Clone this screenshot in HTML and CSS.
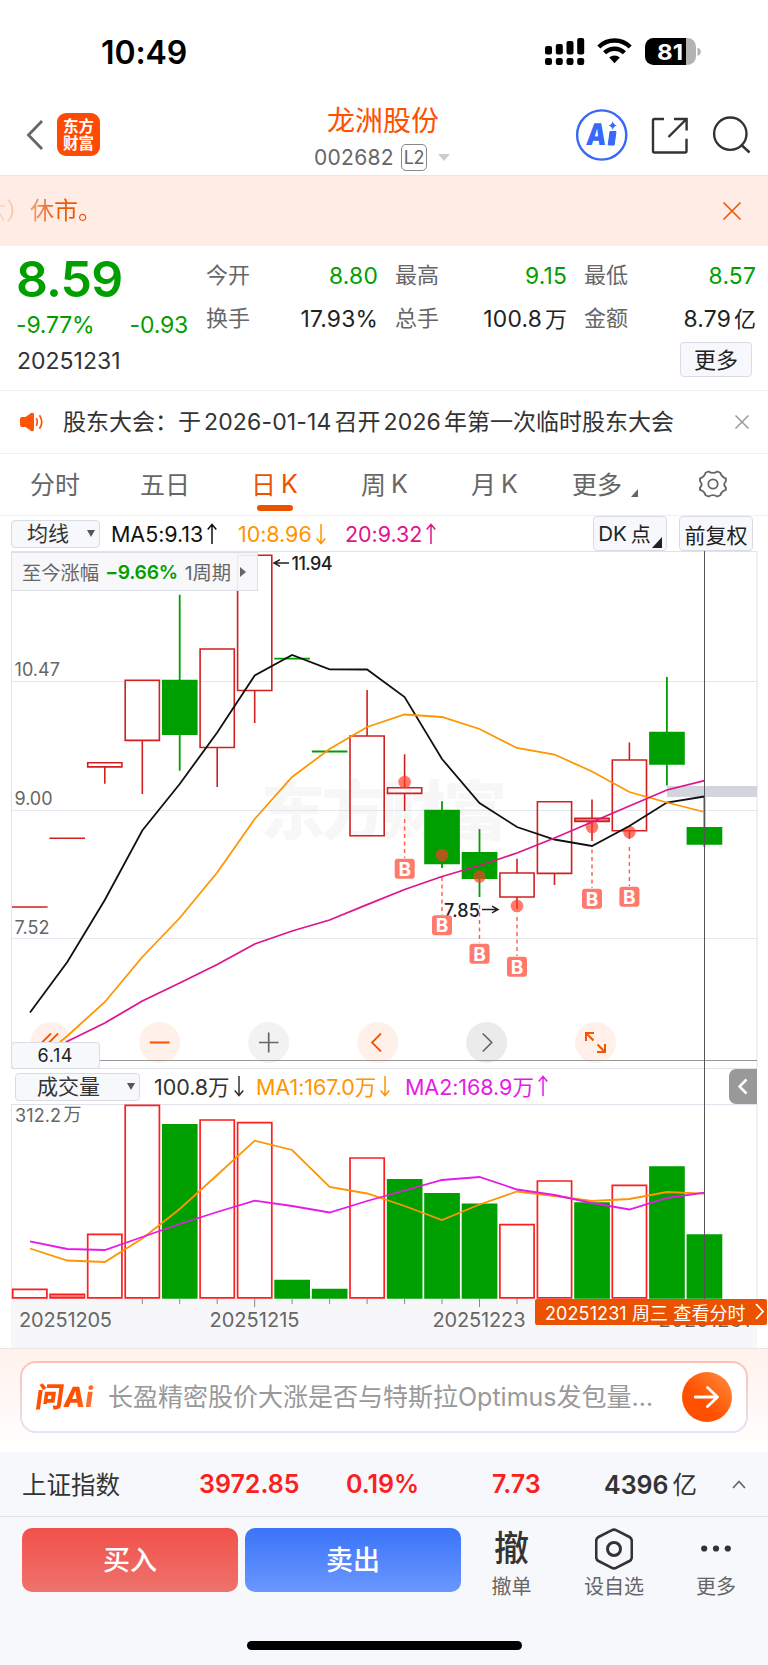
FILE: index.html
```html
<!DOCTYPE html>
<html lang="zh-CN">
<head>
<meta charset="utf-8">
<title>龙洲股份 002682</title>
<link rel="stylesheet" href="styles.css">
</head>
<body>
<div class="phone">
  <header class="status">
    <span class="clock">10:49</span>
    <svg class="status-icons" width="160" height="30" viewBox="542 36 160 30">
      <g fill="#000">
        <rect x="545" y="46" width="7" height="8.5" rx="2"/><rect x="555.8" y="44" width="7" height="10.5" rx="2"/><rect x="566.5" y="41" width="7" height="13.5" rx="2"/><rect x="577.2" y="38" width="7" height="16.5" rx="2"/>
        <rect x="545" y="58" width="7" height="7" rx="2.2"/><rect x="555.8" y="58" width="7" height="7" rx="2.2"/><rect x="566.5" y="58" width="7" height="7" rx="2.2"/><rect x="577.2" y="58" width="7" height="7" rx="2.2"/>
        <path d="M609.2 57.6a7.7 7.7 0 0 1 10.6 0L614.5 63.2z"/>
      </g>
      <path d="M604.6 52.8a14 14 0 0 1 19.8 0M598.8 47a22.3 22.3 0 0 1 31.4 0" fill="none" stroke="#000" stroke-width="4.4"/>
      <path d="M686 38h1.500a8.500 8.500 0 0 1 8.500 8.500v10a8.500 8.500 0 0 1-8.500 8.500H686z" fill="#b3b3b3"/>
      <path d="M653.500 38H686v27H653.500a8.500 8.500 0 0 1-8.500-8.500v-10a8.500 8.500 0 0 1 8.500-8.500z" fill="#000"/>
      <path d="M697.500 47.500q3.300 1.300 3.300 4.300t-3.300 4.300z" fill="#b3b3b3"/>
      <text class="battery-level" x="657" y="60" textLength="26" lengthAdjust="spacingAndGlyphs">81</text>
    </svg>
  </header>

  <nav class="nav">
    <div class="nav-left">
      <svg width="20" height="34" viewBox="0 0 20 34"><path d="M18 3 4.500 17 18 31" fill="none" stroke="#666" stroke-width="2.800"/></svg>
      <div class="app-logo"><span>东方</span><span>财富</span></div>
    </div>
    <div class="nav-title">
      <div class="stock-name">龙洲股份</div>
      <div class="stock-code"><span>002682</span><span class="l2">L2</span><i class="caret"></i></div>
    </div>
    <svg class="nav-icons" width="180" height="56" viewBox="574 107 180 56" fill="none" stroke="#333" stroke-width="2.400">
      <circle cx="601.700" cy="135" r="24.600" stroke="#3868f8"/>
      <text class="ai-text" transform="translate(585.500 145) skewX(-6)" textLength="20" lengthAdjust="spacingAndGlyphs">A</text>
      <path d="M610 131.500l6 0-1.800 13.500h-6z" fill="#3868f8" stroke="#3868f8" stroke-width="1"/>
      <path d="M612.700 121.200q.800 3.600 4.200 4.300-3.400.800-4.200 4.400-.800-3.600-4.200-4.400 3.400-.700 4.200-4.300z" fill="#3868f8" stroke="none"/>
      <path d="M664 119h-9.500a1.500 1.500 0 0 0-1.500 1.500v30.500a1.500 1.500 0 0 0 1.500 1.500h30.500a1.500 1.500 0 0 0 1.500-1.500v-12.300M674 119h12.600v11.500M686 119.500l-17.500 17.500"/>
      <circle cx="730.300" cy="133.700" r="16.200"/><path d="M741.500 145l8 7.500"/>
    </svg>
  </nav>

  <div class="banner"><span class="banner-text">六）休市。</span>
    <svg width="20" height="20" viewBox="0 0 20 20"><path d="M1.500 1.500l17 17M18.500 1.500l-17 17" stroke="#e95a0c" stroke-width="1.700"/></svg>
  </div>

  <section class="quote">
    <div class="quote-main">
      <div class="price">8.59</div>
      <div class="change"><span>-9.77%</span><span>-0.93</span></div>
      <div class="date">20251231</div>
    </div>
    <div class="quote-side">
      <div class="stats">
        <div><span>今开</span><b class="down">8.80</b></div><div><span>最高</span><b class="down">9.15</b></div><div><span>最低</span><b class="down">8.57</b></div>
        <div><span>换手</span><b>17.93%</b></div><div><span>总手</span><b>100.8<em>万</em></b></div><div><span>金额</span><b>8.79<em>亿</em></b></div>
      </div>
      <button class="more">更多</button>
    </div>
  </section>

  <section class="notice">
    <svg width="24" height="20" viewBox="0 0 24 20"><path d="M2 5h3.500L11.500.8Q14 .2 14 2.500v15q0 2.300-2.500 1.700L5.500 15H2q-2 0-2-2V7q0-2 2-2z" fill="#ff5406"/><path d="M16.300 6.200q2 3.800 0 7.600M19.500 3.300q4.500 6.700 0 13.400" fill="none" stroke="#ff5406" stroke-width="1.700"/></svg>
    <p><span>股东大会：</span><span>于</span><span class="num">2026-01-14</span><span>召开</span><span class="num">2026</span><span>年第一次临时股东大会</span></p>
    <svg class="notice-x" width="16" height="16" viewBox="0 0 16 16"><path d="M1.500 1.500l13 13M14.500 1.500l-13 13" stroke="#999" stroke-width="1.500"/></svg>
  </section>

  <nav class="tabs">
    <span>分时</span><span>五日</span><span class="on">日<i>K</i></span><span>周<i>K</i></span><span>月<i>K</i></span><span>更多<svg width="7" height="8" viewBox="0 0 7 8"><path d="M7 0v8H0z" fill="#666"/></svg></span>
    <span class="gear"><svg width="30" height="30" viewBox="0 0 30 30" fill="none" stroke="#666" stroke-width="1.800" stroke-linejoin="round"><path d="M10.800 2.200Q15 5.200 19.200 2.200L22 3.500Q23 7.500 27.300 9.300V12.200Q24.200 15.500 27.300 18.800V21Q23 22.500 22 26.500L19.200 27.800Q15 24.800 10.800 27.800L8 26.500Q7 22.500 2.700 21V18.800Q5.800 15.500 2.700 12.200V9.300Q7 7.500 8 3.500Z" transform="translate(-.8 .3) scale(1.050 .98)"/><circle cx="15" cy="15" r="4.700"/></svg></span>
  </nav>

  <div class="ma-row">
    <div class="select">均线<i></i></div>
    <span class="ma5">MA5:9.13<svg class="arr" width="10" height="22" viewBox="0 0 10 22"><path d="M5 21V2M.700 6.500 5 1.500 9.300 6.500"/></svg></span>
    <span class="ma10">10:8.96<svg class="arr" width="10" height="22" viewBox="0 0 10 22"><path d="M5 1v19M.700 15.500 5 20.500 9.300 15.500"/></svg></span>
    <span class="ma20">20:9.32<svg class="arr" width="10" height="22" viewBox="0 0 10 22"><path d="M5 21V2M.700 6.500 5 1.500 9.300 6.500"/></svg></span>
    <div class="btn dk">DK<em>点</em><svg width="10" height="11" viewBox="0 0 10 11"><path d="M10 0v11H0z" fill="#222"/></svg></div>
    <div class="btn">前复权</div>
  </div>

  <section class="charts">
    <svg class="chart" width="768" height="518" viewBox="0 551 768 518" fill="none">
      <text class="watermark" x="261" y="834" textLength="246">东方财富</text>
      <path d="M11.500 681.500H757M11.500 810.500H757M11.500 938.500H757" stroke="#e3e8f0"/>
      <path d="M11.500 1068.500V551.500H757V1068.500z" stroke="#dfe2ea"/>
      <rect x="667" y="786" width="90" height="11" fill="#d2d5db"/>
      <g class="axis">
        <text x="14.500" y="676" textLength="45.500">10.47</text><text x="14.500" y="805" textLength="38">9.00</text><text x="14.500" y="934" textLength="35">7.52</text>
      </g>
      <g stroke="#009f00" fill="#009f00" stroke-width="1.800">
        <path d="M179.700 594.700V770.700M442 801.300V868M479.500 829V897M666.900 677V785.500M704.400 797V847M274.300 658.700h35.600M311.800 751.500h35.600"/>
        <path stroke="none" d="M161.900 679.700h35.700v55.300h-35.700zM424.200 809.700h35.700v54.500h-35.700zM461.700 852h35.700v27h-35.700zM649.100 731.800h35.700v32.900h-35.700zM686.600 827h35.700v17.700h-35.700z"/>
      </g>
      <g stroke="#d22020" stroke-width="1.600">
        <path d="M12 907h35.600M49.400 838.300h35.600M104.800 767v16.700M142.300 740.500V794M217.200 747.500V787M254.700 690.500V723M367.100 736V690M404.600 787V754.300M404.600 794V811M517 873V858.700M517 897V909M554.500 873V885M592 799.500V841M629.400 760V742.500M629.400 831V839"/>
        <path d="M87.700 762.700h34.200v4.200h-34.200zM125.200 680.300h34.200v60.100h-34.200zM200.100 649h34.200v98.500h-34.200zM237.600 555.300h34.200v135.200h-34.200zM350 736h34.200v99.800H350zM387.500 787.700h34.200v5.700h-34.200zM499.900 873h34.200v24h-34.200zM537.400 801.700h34.200v71.700h-34.200zM612.300 760h34.200v70.700h-34.200z"/>
        <path fill="#e68080" d="M574.900 818.300h34.200v3.100h-34.200z"/>
      </g>
      <g class="extreme"><path d="M289 563H274.500M280 559.700l-6 3.300 6 3.300M482 909.500h15M492 906.200l6 3.300-6 3.300" stroke="#222" stroke-width="1.500"/><text x="291.500" y="569.500" textLength="41">11.94</text><text x="444" y="917" textLength="36">7.85</text></g>
      <g fill="#ff3b25" fill-opacity=".68"><circle cx="404.600" cy="782" r="6.300"/><circle cx="442" cy="855" r="6.300"/><circle cx="479.500" cy="876.500" r="6.300"/><circle cx="517" cy="906" r="6.300"/><circle cx="592" cy="827" r="6.300"/><circle cx="629.400" cy="832" r="6.300"/></g>
      <path d="M404.600 819V858M442 877V915M479.500 905V943M517 917V956M592 849.500V888M629.400 847V886" stroke="#ff5a48" stroke-width="1.400" stroke-dasharray="4 3.500"/>
      <path d="M30 1012.500 67.300 962 104.800 900 142.300 830.500 179.700 784 217.200 732.500 254.700 675.500 292.100 655 329.600 669.300 367.100 669.500 404.600 697 442 759 479.500 803 517 827 554.500 839.500 592 846 629.400 826 666.900 802.500 704.400 796.500" stroke="#111" stroke-width="1.800"/>
      <g class="tools">
        <circle cx="51" cy="1042.500" r="20.500" fill="#fff0e9"/><circle cx="159.700" cy="1042.500" r="20.500" fill="#fff0e9"/><circle cx="268.700" cy="1042.500" r="20.500" fill="#f2f2f2"/><circle cx="377.700" cy="1042.500" r="20.500" fill="#fff0e9"/><circle cx="486.700" cy="1042.500" r="20.500" fill="#ebebeb"/><circle cx="595.500" cy="1042.500" r="20.500" fill="#fff0e9"/>
        <path d="M51 1033.500l-9 9 9 9M58 1033.500l-9 9 9 9M149.800 1042.500h19.800M381 1033.500l-9 9 9 9" stroke="#f05508" stroke-width="1.800"/>
        <path d="M259 1042.500h19.500M268.700 1032.500v20M482.700 1033.500l9 9-9 9" stroke="#666" stroke-width="1.700"/>
        <path d="M586 1041v-8h8M586.500 1033.500l7 7M605 1044v8h-8M604.500 1051.500l-7-7" stroke="#f05508" stroke-width="2"/>
      </g>
      <path d="M60 1042 67.300 1036 104.800 1002 142.300 957 179.700 918 217.200 872.500 254.700 819 292.100 777 329.600 749 367.100 727 404.600 714.500 442 717 479.500 729 517 748 554.500 754.500 592 771.500 629.400 792 666.900 802.500 704.400 812" stroke="#ff9500" stroke-width="1.800"/>
      <path d="M66 1042 104.800 1023 142.300 1001 179.700 983 217.200 964.500 254.700 944 292.100 931 329.600 920 367.100 904.700 404.600 889.500 442 876.500 479.500 865.500 517 853 554.500 838 592 822 629.400 806 666.900 790 704.400 780.700" stroke="#e0148c" stroke-width="1.800"/>
      <path d="M100 1060.500H757" stroke="#999"/>
      <g fill="#ff7a6b"><rect x="394.700" y="858.700" width="20" height="20" rx="3"/><rect x="432" y="915.200" width="20" height="20" rx="3"/><rect x="469.500" y="943.700" width="20" height="20" rx="3"/><rect x="507" y="956.800" width="20" height="20" rx="3"/><rect x="582" y="888.800" width="20" height="20" rx="3"/><rect x="619.400" y="886.700" width="20" height="20" rx="3"/></g>
      <g class="buy"><text x="404.700" y="875.800">B</text><text x="442" y="932.300">B</text><text x="479.500" y="960.800">B</text><text x="517" y="973.900">B</text><text x="592" y="905.900">B</text><text x="629.400" y="903.800">B</text></g>
      <rect x="11.500" y="1042.500" width="88" height="26" rx="3" fill="#f7f8fb" stroke="#d9dce4"/>
      <text class="low" x="37.500" y="1062" textLength="35">6.14</text>
    </svg>
    <div class="gain"><span>至今涨幅</span><b>−9.66%</b><span>1周期</span><svg width="6" height="10" viewBox="0 0 6 10"><path d="M0 0l6 5-6 5z" fill="#666"/></svg></div>

    <div class="vol-row">
      <div class="select">成交量<i></i></div>
      <span class="v0">100.8万<svg class="arr" width="10" height="22" viewBox="0 0 10 22"><path d="M5 1v19M.700 15.500 5 20.500 9.300 15.500"/></svg></span>
      <span class="v1">MA1:167.0万<svg class="arr" width="10" height="22" viewBox="0 0 10 22"><path d="M5 1v19M.700 15.500 5 20.500 9.300 15.500"/></svg></span>
      <span class="v2">MA2:168.9万<svg class="arr" width="10" height="22" viewBox="0 0 10 22"><path d="M5 21V2M.700 6.500 5 1.500 9.300 6.500"/></svg></span>
      <div class="drawer"><svg width="10" height="17" viewBox="0 0 10 17"><path d="M8.500 1.500l-7 7 7 7" fill="none" stroke="#fff" stroke-width="2.600"/></svg></div>
    </div>

    <svg class="chart" width="768" height="244" viewBox="0 1104 768 244" fill="none">
      <rect x="11" y="1299" width="746" height="49" fill="#f7f7fa"/>
      <path d="M11.500 1299V1104.500H757V1299" stroke="#dfe2ea"/>
      <g class="axis"><text x="15" y="1122" textLength="46">312.2</text><text x="63.500" y="1121" textLength="16">万</text></g>
      <path fill="#009f00" d="M161.900 1124h35.700v174.700h-35.700zM274.300 1279.700h35.700v19h-35.700zM311.800 1288.700h35.700v10h-35.700zM386.800 1179h35.700v119.700h-35.700zM424.200 1193h35.700v105.700h-35.700zM461.700 1203.500h35.700v95.200h-35.700zM574.200 1202.300h35.700v96.400h-35.700zM649.100 1166.300h35.700v132.400h-35.700zM686.600 1234.300h35.700v64.400h-35.700z"/>
      <path stroke="#fb2020" stroke-width="1.700" d="M12.700 1289.300h34.200v8.500H12.700zM50.200 1294.300h34.200v3.500H50.200zM87.700 1234.300h34.200v63.500H87.700zM125.200 1105.300h34.200v192.500h-34.200zM200.100 1120h34.200v177.800h-34.200zM237.600 1122.700h34.200v175.100h-34.200zM350 1158h34.200v139.800H350zM499.900 1224.700h34.200v73.100h-34.200zM537.400 1181h34.200v116.800h-34.200zM612.300 1185.300h34.200v112.500h-34.200z"/>
      <path fill="#f77" d="M51 1295h32.500v2H51z"/>
      <path d="M142.300 1299v5M179.700 1299v5M217.200 1299v5M254.700 1299v8M292.100 1299v5M329.600 1299v5M367.100 1299v5M404.600 1299v5M442 1299v5M479.500 1299v8M517 1299v5" stroke="#888"/>
      <path d="M30 1248.500 67.300 1260.500 104.800 1262 142.300 1238.500 179.700 1209 217.200 1175 254.700 1140.700 292.100 1150 329.600 1187 367.100 1193.500 404.600 1206 442 1220 479.500 1204.500 517 1191.500 554.500 1196 592 1201 629.400 1199 666.900 1192 704.400 1193.700" stroke="#ff9500" stroke-width="1.800"/>
      <path d="M30 1241.300 67.300 1249 104.800 1250 142.300 1237 179.700 1224 217.200 1212 254.700 1200.700 292.100 1206 329.600 1212.500 367.100 1201 404.600 1190.500 442 1180 479.500 1177 517 1189.500 554.500 1195 592 1203 629.400 1209.500 666.900 1198 704.400 1192.700" stroke="#e61ae6" stroke-width="1.800"/>
      <g class="dates"><text x="19" y="1326.500" textLength="93">20251205</text><text x="209.500" y="1326.500" textLength="90">20251215</text><text x="432.500" y="1326.500" textLength="93">20251223</text><text x="658.500" y="1326.500" textLength="92">20251231</text></g>
    </svg>
    <div class="crosshair"></div>
    <div class="day-tag"><span>20251231 周三 查看分时</span><svg width="9" height="17" viewBox="0 0 9 17"><path d="M1 1l7 7.500L1 16" fill="none" stroke="#fff" stroke-width="1.800"/></svg></div>
  </section>

  <section class="ask">
    <div class="ask-box">
      <span class="ask-logo">问Ai</span>
      <span class="ask-text">长盈精密股价大涨是否与特斯拉Optimus发包量…</span>
      <span class="ask-go"><svg width="26" height="22" viewBox="0 0 26 22"><path d="M1 11h22M13.500 1.500 23.500 11l-10 9.500" fill="none" stroke="#fff" stroke-width="2.800" stroke-linecap="round" stroke-linejoin="round"/></svg></span>
    </div>
  </section>

  <section class="index">
    <span class="ix0">上证指数</span><b class="ix1">3972.85</b><b class="ix2">0.19%</b><b class="ix3">7.73</b><span class="ix4"><b>4396</b>亿</span>
    <svg width="14" height="9" viewBox="0 0 14 9"><path d="M1 8l6-6.500L13 8" fill="none" stroke="#666" stroke-width="1.700"/></svg>
  </section>

  <footer class="footer">
    <div class="actions">
      <button class="buy-btn">买入</button><button class="sell-btn">卖出</button>
      <div class="act a1"><span class="glyph">撤</span><span>撤单</span></div>
      <div class="act a2"><svg width="38" height="42" viewBox="0 0 38 42" fill="none" stroke="#333" stroke-width="2.600"><path d="M16.500 2.300q2.500-1.400 5 0L34.500 9q2.300 1.300 2.300 4v16q0 2.700-2.300 4l-13 6.700q-2.500 1.400-5 0L3.500 33q-2.300-1.300-2.300-4V13q0-2.700 2.300-4z"/><circle cx="19" cy="21" r="6.500" stroke-width="3"/></svg><span>设自选</span></div>
      <div class="act a3"><svg width="30" height="42" viewBox="0 0 30 42" fill="#333"><circle cx="3.200" cy="20.500" r="3.100"/><circle cx="15" cy="20.500" r="3.100"/><circle cx="26.800" cy="20.500" r="3.100"/></svg><span>更多</span></div>
    </div>
    <div class="home-bar"></div>
  </footer>
</div>
</body>
</html>
```
FILE: styles.css
```css
* { box-sizing: border-box; }
body { margin: 0; background: #fff; font-family: Inter, "Noto Sans CJK SC", sans-serif; color: #333; }
.phone { width: 768px; height: 1665px; overflow: hidden; }
svg { display: block; flex: none; }
i, em, b { font-style: normal; font-weight: 400; }
button { font: inherit; padding: 0; border: 0; }

.status { height: 100px; display: flex; align-items: flex-start; padding: 36px 66px 0 101px; justify-content: space-between; }
.clock { font-size: 32px; line-height: 34px; font-weight: 600; color: #000; letter-spacing: -.1px; }
.battery-level { font-size: 22px; font-weight: 700; fill: #fff; }

.nav { height: 76px; border-bottom: 1px solid #e8e8e8; display: grid; grid-template-columns: 300px 1fr 194px; }
.nav-left { display: flex; gap: 13px; padding: 13px 0 0 24px; height: 56px; align-items: center; }
.app-logo { width: 43px; height: 43px; margin: 0; border-radius: 9px; background: #ff4a05; color: #fff; font-weight: 700; font-size: 15.500px; line-height: 17px; display: flex; flex-direction: column; align-items: center; justify-content: center; }
.nav-title { padding: 4px 0 0 13px; }
.stock-name { font-size: 28px; line-height: 34px; color: #ff5000; padding-left: 14px; }
.stock-code { display: flex; align-items: center; color: #666; font-size: 21px; line-height: 26px; margin-top: 6px; letter-spacing: .3px; margin-left: 1px; }
.l2 { width: 26px; height: 27px; border: 1.300px solid #888; border-radius: 5px; font-size: 18px; line-height: 25px; text-align: center; margin-left: 7px; letter-spacing: -.5px; }
.caret { border: 6.500px solid transparent; border-top: 7px solid #ccc; border-bottom: 0; margin-left: 11px; }
.nav-icons { margin-top: 7px; }
.ai-text { font-size: 30px; font-weight: 900; fill: #3868f8; stroke: none; }

.banner { height: 70px; background: #ffede5; display: flex; align-items: center; justify-content: space-between; padding: 0 26px 0 0; }
.banner-text { font-size: 24px; line-height: 36px; margin: -1px 0 0 -18px; color: #e95a0c; background: linear-gradient(90deg, rgba(233,90,12,.1) 15px, rgba(233,90,12,.4) 42px, #e95a0c 75px); -webkit-background-clip: text; background-clip: text; -webkit-text-fill-color: transparent; }

.quote { height: 145px; border-bottom: 1px solid #f0f0f0; display: grid; grid-template-columns: 206px 1fr; }
.quote-main { padding: 3px 0 0 16px; }
.price { font-size: 50px; line-height: 60px; font-weight: 600; color: #009f00; letter-spacing: -.9px; }
.change { display: flex; justify-content: space-between; width: 172px; color: #009f00; font-size: 23px; line-height: 28px; margin-top: 2px; letter-spacing: -.2px; }
.date { font-size: 23px; line-height: 28px; margin-top: 8px; padding-left: 1px; letter-spacing: 0; }
.stats { display: grid; grid-template-columns: repeat(3, 172px); column-gap: 17px; padding-top: 8px; height: 95px; align-content: start; }
.stats div { display: flex; justify-content: space-between; align-items: center; height: 43px; font-size: 22px; line-height: 32px; color: #666; }
.stats div > span { margin-top: -1px; }
.stats b { color: #222; font-size: 22.800px; letter-spacing: .2px; }
.stats .down { color: #009f00; }
.stats em { margin-left: 3px; font-size: 22px; letter-spacing: 0; }
.more { display: block; width: 72px; height: 35px; margin: 1px 0 0 474px; background: #f7f8fb; border: 1px solid #d9dce4; border-radius: 4px; font-size: 22px; line-height: 32px; color: #222; }

.notice { height: 63px; border-bottom: 1px solid #f0f0f0; display: flex; align-items: center; padding: 0 18px 0 20px; }
.notice p { margin: 0 0 0 19px; font-size: 23px; line-height: 34px; white-space: nowrap; display: flex; flex: 1; }
.notice .num { margin: 0 3px; letter-spacing: .15px; }

.tabs { height: 62px; border-bottom: 1px solid #f0f0f0; display: grid; grid-template-columns: repeat(6, 110px) 1fr; font-size: 25px; color: #666; }
.tabs span { display: flex; align-items: center; justify-content: center; position: relative; padding-bottom: 3px; }
.tabs i { margin: 1px 1px 0 5px; }
.tabs span:not(.gear) > svg { margin: 20px 0 0 9px; }
.tabs .gear { padding: 0 2px 2px 0; }
.tabs .on { color: #eb5200; }
.tabs .on::after { content: ""; position: absolute; left: 37px; bottom: 4px; width: 36px; height: 6px; border-radius: 3px; background: #eb5200; }

.ma-row { height: 35px; display: flex; align-items: center; padding-left: 11px; font-size: 21.500px; }
.select { display: flex; align-items: center; justify-content: space-between; width: 89px; height: 28px; background: #f7f8fb; border: 1px solid #d9dce4; border-radius: 4px; padding: 0 4px 0 15px; font-size: 21px; line-height: 26px; }
.select i { border: 4.500px solid transparent; border-top: 7px solid #555; border-bottom: 0; }
.ma-row > span, .vol-row > span { display: flex; align-items: center; white-space: nowrap; letter-spacing: -.05px; }
.arr { margin-left: 4px; fill: none; stroke: currentColor; stroke-width: 1.500; }
.ma5 { width: 127px; margin-left: 11px; color: #111; }
.ma10 { width: 107px; color: #ff9500; }
.ma20 { width: 248px; color: #e0148c; }
.btn { width: 74px; height: 35px; margin-right: 12px; background: #f7f8fb; border: 1px solid #d9dce4; border-radius: 4px; display: flex; align-items: center; justify-content: center; font-size: 21px; color: #222; white-space: nowrap; }
.dk { font-size: 20.500px; padding-right: 3px; }
.dk em { margin-left: 4px; font-size: 20px; }
.dk svg { margin: 18px -3px 0 1px; }

.charts { position: relative; height: 797px; }
.axis text { font-size: 18px; fill: #666; }
.watermark { font-size: 64px; font-weight: 900; fill: #f7f7f8; }
.extreme text { font-size: 18px; font-weight: 500; fill: #222; }
.buy text { font-size: 19px; font-weight: 700; fill: #fff; text-anchor: middle; }
.low { font-size: 18px; fill: #222; }
.dates text { font-size: 20px; fill: #666; }
.gain { position: absolute; left: 11px; top: 1px; width: 247px; height: 39px; background: rgba(248,248,251,.93); border: 1px solid #dcdfe6; display: flex; align-items: center; padding-left: 10px; font-size: 19.300px; color: #666; white-space: nowrap; }
.gain b { font-weight: 600; color: #009f00; margin: 0 7px 0 6px; letter-spacing: -.3px; }
.gain svg { margin-left: 9px; }

.vol-row { height: 35px; display: flex; align-items: center; padding-left: 15px; font-size: 21.500px; }
.vol-row > span { padding-bottom: 2px; }
.vol-row .select { width: 125px; padding-left: 21px; }
.v0 { margin-left: 14px; width: 102px; }
.v1 { width: 149px; color: #ff9500; }
.v2 { width: 324px; color: #e61ae6; }
.drawer { width: 28px; height: 35px; border-radius: 7px 0 0 7px; background: #999; display: flex; align-items: center; justify-content: center; }
.crosshair { position: absolute; left: 704px; top: 0; width: 1px; height: 748px; background: #555; }
.day-tag { position: absolute; left: 535px; top: 748px; width: 232px; height: 26px; background: #eb5200; border-radius: 2px; color: #fff; font-size: 18px; display: flex; align-items: center; justify-content: space-between; padding: 0 3px 1px 10px; letter-spacing: .1px; white-space: nowrap; }

.ask { height: 104px; padding: 12px 20px 0; border-top: 1px solid #e9e4e6; background: linear-gradient(#fff2ed, #fff); }
.ask-box { height: 72px; width: 728px; border: 2px solid transparent; border-radius: 16px; background: linear-gradient(#fff, #fff) padding-box, linear-gradient(#ffc0b3, #dfe6f8) border-box; display: flex; align-items: center; padding: 0 14px; }
.ask-logo { font-size: 28px; font-weight: 800; line-height: 36px; width: 66px; white-space: nowrap; transform: skewX(-8deg); background: linear-gradient(100deg, #ff5000 60%, #ff9060); -webkit-background-clip: text; background-clip: text; -webkit-text-fill-color: transparent; }
.ask-text { font-size: 25px; line-height: 36px; color: #999; white-space: nowrap; margin: -1px 0 0 6px; flex: 1; }
.ask-go { width: 50px; height: 50px; border-radius: 50%; background: linear-gradient(45deg, #ff5000 40%, #ff9040); display: flex; align-items: center; justify-content: center; }

.index { height: 65px; background: #f7f8fb; border-bottom: 1px solid #e3e4e8; display: flex; align-items: center; padding-left: 22px; font-size: 24.500px; }
.index b { font-weight: 600; font-size: 25px; color: #fb2020; }
.index .ix4 b { color: #333; margin-right: 4px; }
.ix0 { width: 177px; margin-top: -2px; }
.ix1 { width: 147px; }
.ix2 { width: 146px; }
.ix3 { width: 112px; }
.ix4 { width: 128px; white-space: nowrap; margin-top: -2px; }

.footer { height: 148px; background: #f7f8fb; }
.actions { display: flex; padding: 11px 0 0 22px; height: 124px; align-items: flex-start; }
.buy-btn, .sell-btn { width: 216px; height: 64px; border-radius: 10px; font-size: 27px; line-height: 60px; padding-top: 1px; font-weight: 500; color: #fff; }
.buy-btn { background: linear-gradient(#f2504a, #ee736d); margin-right: 7px; }
.sell-btn { background: linear-gradient(#3a74f8, #6b97ff); }
.act { display: flex; flex-direction: column; align-items: center; font-size: 20px; line-height: 28px; color: #666; white-space: nowrap; }
.act > :first-child { height: 42px; margin-bottom: 3px; }
.glyph { font-size: 35px; line-height: 40px; font-weight: 500; color: #333; }
.a1 { width: 101px; }
.a2 { width: 104px; }
.a3 { width: 100px; }
.home-bar { width: 275px; height: 9px; border-radius: 5px; background: #000; margin: 0 auto; }
```
